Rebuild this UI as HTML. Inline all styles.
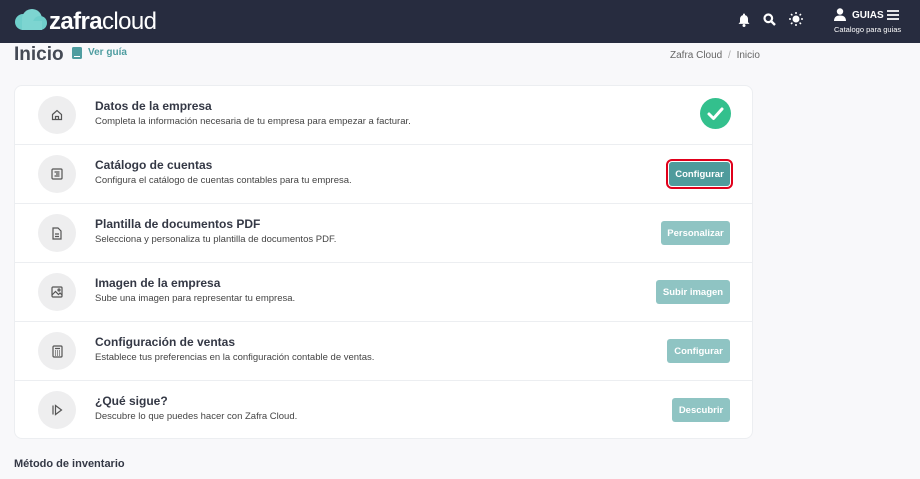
<!DOCTYPE html>
<html><head><meta charset="utf-8">
<style>
*{margin:0;padding:0;box-sizing:border-box}
body{width:920px;height:479px;overflow:hidden;background:#f8f8fa;font-family:"Liberation Sans",sans-serif;color:#3b3f4c;position:relative}
.hdr{position:absolute;left:0;top:0;width:920px;height:43px;background:#272c3f}
.logo{position:absolute;left:49px;top:8px;color:#fff;font-size:24px;letter-spacing:-0.6px}
.logo b{font-weight:bold}
.t{position:absolute;left:14px;top:44px;font-size:19px;font-weight:bold;color:#454a55}
.vg{position:absolute;left:88px;top:47px;font-size:10px;font-weight:bold;color:#4f9da0}
.bc{position:absolute;left:670px;top:50px;font-size:10px;color:#666}
.card{position:absolute;left:14px;top:85px;width:739px;height:354px;background:#fff;border:1px solid #eceef1;border-radius:8px}
.row{position:absolute;left:0;width:737px;height:59px;border-bottom:1px solid #eceef1}
.row:last-child{border-bottom:none}
.ic{position:absolute;left:23px;top:10px;width:38px;height:38px;border-radius:50%;background:#eeeeef;display:flex;align-items:center;justify-content:center}
.h{position:absolute;left:80px;top:13px;font-size:12px;font-weight:bold;color:#343845}
.d{position:absolute;left:80px;top:30px;font-size:9.5px;color:#444}
.btn{position:absolute;right:22px;top:17px;height:24px;background:#8fc4c3;color:#fff;font-size:9.5px;font-weight:600;display:flex;align-items:center;justify-content:center;border-radius:3px}
.sel{background:#4f9b9c;outline:2px solid #e0001b;outline-offset:1px}
.mi{position:absolute;left:14px;top:458px;font-size:11px;font-weight:bold;color:#343845}
</style></head><body>
<div class="hdr">
<svg style="position:absolute;left:14px;top:9px" width="34" height="22" viewBox="0 0 34 22"><circle cx="9" cy="13" r="8" fill="#6fcfcb"/><circle cx="18" cy="10" r="10" fill="#7dd5d1"/><circle cx="26" cy="14" r="7" fill="#6fcfcb"/><rect x="8" y="12" width="20" height="9" fill="#7dd5d1"/></svg>
<div class="logo"><b>zafra</b>cloud</div>
<svg style="position:absolute;left:738px;top:13px" width="12" height="14" viewBox="0 0 12 14"><path d="M6 0.5a1 1 0 0 1 1 1v0.6c2 .5 3 2 3 4v3l1.5 1.8H0.5L2 9.1v-3c0-2 1-3.5 3-4v-.6a1 1 0 0 1 1-1z" fill="#fff"/><circle cx="6" cy="12.5" r="1.5" fill="#fff"/></svg>
<svg style="position:absolute;left:763px;top:13px" width="13" height="13" viewBox="0 0 13 13"><circle cx="5.3" cy="5.3" r="3.8" fill="none" stroke="#fff" stroke-width="2.2"/><path d="M8 8l4 4" stroke="#fff" stroke-width="2.4"/></svg>
<svg style="position:absolute;left:789px;top:12px" width="14" height="14" viewBox="0 0 14 14"><circle cx="7" cy="7" r="3.5" fill="#fff"/><g stroke="#fff" stroke-width="1.5"><path d="M7 0v2M7 12v2M0 7h2M12 7h2M2 2l1.4 1.4M10.6 10.6L12 12M2 12l1.4-1.4M10.6 3.4L12 2"/></g></svg>
<svg style="position:absolute;left:834px;top:8px" width="12" height="13" viewBox="0 0 12 13"><circle cx="6" cy="3.5" r="3.2" fill="#fff"/><path d="M0 13c0-4 2.5-5.5 6-5.5s6 1.5 6 5.5z" fill="#fff"/></svg>
<div style="position:absolute;left:852px;top:10px;color:#fff;font-size:10px;font-weight:bold">GUIAS</div>
<svg style="position:absolute;left:887px;top:10px" width="12" height="10" viewBox="0 0 12 10"><path d="M0 1h12M0 5h12M0 9h12" stroke="#fff" stroke-width="1.8"/></svg>
<div style="position:absolute;left:834px;top:25px;color:#fff;font-size:7.5px">Catalogo para guias</div>
</div>
<div class="t">Inicio</div>
<svg style="position:absolute;left:72px;top:47px" width="10" height="12" viewBox="0 0 10 12"><rect x="0" y="0" width="10" height="12" rx="1.5" fill="#4f9da0"/><path d="M2 9.5h6" stroke="#fff" stroke-width="1"/></svg>
<div class="vg">Ver guía</div>
<div class="bc">Zafra Cloud <span style="color:#aaa;margin:0 3px">/</span> Inicio</div>
<div class="card">
<div class="row" style="top:0"><div class="ic"><svg width="12" height="12" viewBox="0 0 12 12" fill="none" stroke="#555" stroke-width="1.2"><path d="M1.5 5.5L6 1.5l4.5 4v5h-9z"/><path d="M4.5 10.5v-3h3v3"/></svg></div><div class="h">Datos de la empresa</div><div class="d">Completa la información necesaria de tu empresa para empezar a facturar.</div>
<svg style="position:absolute;right:21px;top:12px" width="31" height="31" viewBox="0 0 31 31"><circle cx="15.5" cy="15.5" r="15.5" fill="#33c08d"/><path d="M9 16l4.5 4.5L22 11" stroke="#fff" stroke-width="3" fill="none" stroke-linecap="round" stroke-linejoin="round"/></svg></div>
<div class="row" style="top:59px"><div class="ic"><svg width="12" height="12" viewBox="0 0 12 12" fill="none" stroke="#555" stroke-width="1.2"><rect x="1" y="1" width="10" height="10" rx="1"/><path d="M3.5 4h5M5 6h3.5M3.5 8h5"/></svg></div><div class="h">Catálogo de cuentas</div><div class="d">Configura el catálogo de cuentas contables para tu empresa.</div><div class="btn sel" style="width:61px">Configurar</div></div>
<div class="row" style="top:118px"><div class="ic"><svg width="12" height="13" viewBox="0 0 12 13" fill="none" stroke="#555" stroke-width="1.2"><path d="M2 1h5l3 3v8H2z"/><path d="M4 7h4M4 9.5h4"/></svg></div><div class="h">Plantilla de documentos PDF</div><div class="d">Selecciona y personaliza tu plantilla de documentos PDF.</div><div class="btn" style="width:69px">Personalizar</div></div>
<div class="row" style="top:177px"><div class="ic"><svg width="12" height="12" viewBox="0 0 12 12" fill="none" stroke="#555" stroke-width="1.2"><rect x="1" y="1" width="10" height="10" rx="1"/><path d="M1 9l3.5-3.5 3 3 1.5-1.5 2 2"/><circle cx="8" cy="4" r="1"/></svg></div><div class="h">Imagen de la empresa</div><div class="d">Sube una imagen para representar tu empresa.</div><div class="btn" style="width:74px">Subir imagen</div></div>
<div class="row" style="top:236px"><div class="ic"><svg width="11" height="13" viewBox="0 0 11 13" fill="none" stroke="#555" stroke-width="1.2"><rect x="1" y="1" width="9" height="11" rx="1"/><path d="M3 3.5h5M3 6h1M5 6h1M7 6h1M3 8h1M5 8h1M7 8h1M3 10h1M5 10h1M7 10h1"/></svg></div><div class="h">Configuración de ventas</div><div class="d">Establece tus preferencias en la configuración contable de ventas.</div><div class="btn" style="width:63px">Configurar</div></div>
<div class="row" style="top:295px"><div class="ic"><svg width="12" height="12" viewBox="0 0 12 12" fill="none" stroke="#555" stroke-width="1.2"><path d="M2 1.5v9M4.5 1.5l6 4.5-6 4.5z"/></svg></div><div class="h">¿Qué sigue?</div><div class="d">Descubre lo que puedes hacer con Zafra Cloud.</div><div class="btn" style="width:58px">Descubrir</div></div>
</div>
<div class="mi">Método de inventario</div>
</body></html>
